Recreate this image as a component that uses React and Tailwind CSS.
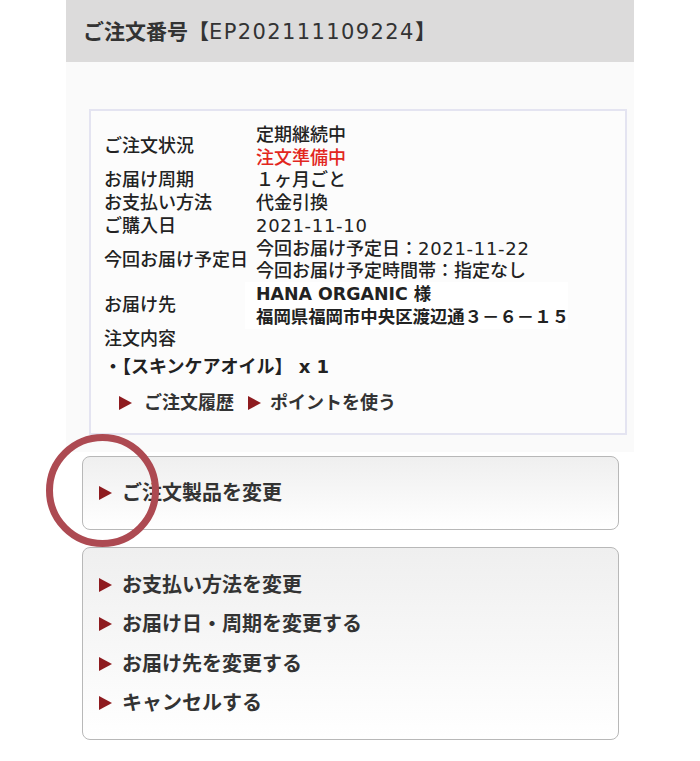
import React from "react";

const font = { fontFamily: '"DejaVu Sans", "Noto Sans CJK JP", sans-serif' };

function Arrow({ className = "" }) {
  return (
    <svg width="13" height="14" viewBox="0 0 13 14" className={className}>
      <polygon points="0,0 13,7 0,14" fill="#8e1b1f" />
    </svg>
  );
}

const Num = ({ children }) => <span className="tracking-[0.7px]">{children}</span>;

const rows = [
  { label: "ご注文状況", values: [<span>定期継続中</span>, <span className="text-[#e2261e]">注文準備中</span>] },
  { label: "お届け周期", values: [<span>１ヶ月ごと</span>] },
  { label: "お支払い方法", values: [<span>代金引換</span>] },
  { label: "ご購入日", values: [<Num>2021-11-10</Num>] },
  {
    label: "今回お届け予定日",
    values: [
      <span>
        今回お届け予定日：<Num>2021-11-22</Num>
      </span>,
      <span>今回お届け予定時間帯：指定なし</span>,
    ],
  },
];

const actions = ["お支払い方法を変更", "お届け日・周期を変更する", "お届け先を変更する", "キャンセルする"];

export default function App() {
  return (
    <div className="relative w-[700px] h-[761px] bg-white text-[#222]" style={font}>
      <div className="ml-[66px] w-[568px]">
        <div className="h-[62px] bg-[#dcdbdb] pl-[17px] flex items-center text-[21px] font-semibold text-[#333] pt-[3px]">
          ご注文番号【<span className="font-normal tracking-[1.4px]">EP202111109224</span>】
        </div>

        <div className="bg-[#fafafa] pt-[47px] pb-[17px] pl-[23px] pr-[7px]">
          <div className="border-2 border-[#e4e4f1] bg-[#fcfcfc] pl-[13px] pt-[13px] pb-[19px] text-[18px] leading-[22.7px] font-medium">
            {rows.map((r) => (
              <div key={r.label} className="grid grid-cols-[152px_1fr] items-center">
                <div>{r.label}</div>
                <div>
                  {r.values.map((v, i) => (
                    <div key={i}>{v}</div>
                  ))}
                </div>
              </div>
            ))}
            <div className="grid grid-cols-[141px_1fr] items-center">
              <div>お届け先</div>
              <div className="bg-white pl-[11px] w-[323px] py-[1px] -my-[1px] font-semibold text-[17.4px] whitespace-nowrap">
                <div>HANA ORGANIC 様</div>
                <div>福岡県福岡市中央区渡辺通３－６－１５</div>
              </div>
            </div>
            <div>注文内容</div>
            <div className="mt-[5px] font-semibold">・【スキンケアオイル】 x 1</div>
            <div className="mt-[13px] pl-[15px] flex items-center font-bold text-[#333]">
              <Arrow />
              <span className="ml-[12px]">ご注文履歴</span>
              <Arrow className="ml-[14px]" />
              <span className="ml-[9px]">ポイントを使う</span>
            </div>
          </div>
        </div>
      </div>

      <div className="ml-[82px] w-[537px] mt-[4px] h-[74px] rounded-[8px] border border-[#b8b8b8] bg-linear-to-b from-[#efefef] to-white flex items-center pl-[16px] text-[20px] font-bold text-[#333]">
        <Arrow />
        <span className="ml-[10px]">ご注文製品を変更</span>
      </div>

      <div className="ml-[82px] w-[537px] mt-[17px] h-[193px] rounded-[8px] border border-[#b8b8b8] bg-linear-to-b from-[#efefef] to-white pt-[17px] pl-[16px] text-[20px] font-bold text-[#333]">
        {actions.map((a) => (
          <div key={a} className="h-[39.3px] flex items-center">
            <Arrow />
            <span className="ml-[10px]">{a}</span>
          </div>
        ))}
      </div>

      <div className="absolute left-[46px] top-[434px] w-[113px] h-[113px] rounded-full border-[7px] border-[#ad4a52]" />
    </div>
  );
}
